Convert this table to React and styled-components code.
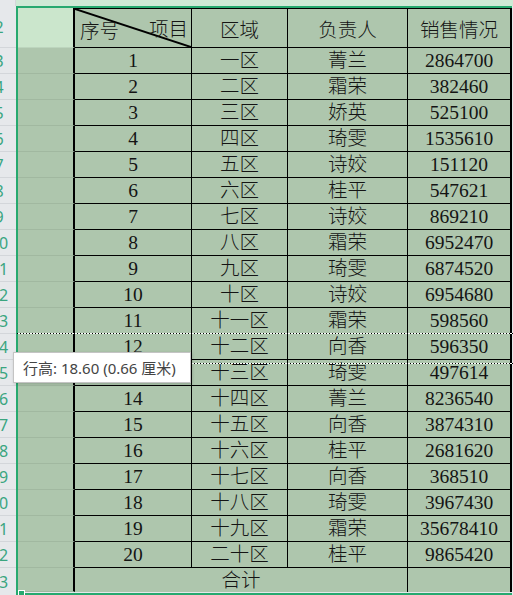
import styled, { createGlobalStyle } from 'styled-components';

const rows = [
  [1, '一区', '菁兰', 2864700],
  [2, '二区', '霜荣', 382460],
  [3, '三区', '娇英', 525100],
  [4, '四区', '琦雯', 1535610],
  [5, '五区', '诗姣', 151120],
  [6, '六区', '桂平', 547621],
  [7, '七区', '诗姣', 869210],
  [8, '八区', '霜荣', 6952470],
  [9, '九区', '琦雯', 6874520],
  [10, '十区', '诗姣', 6954680],
  [11, '十一区', '霜荣', 598560],
  [12, '十二区', '向香', 596350],
  [13, '十三区', '琦雯', 497614],
  [14, '十四区', '菁兰', 8236540],
  [15, '十五区', '向香', 3874310],
  [16, '十六区', '桂平', 2681620],
  [17, '十七区', '向香', 368510],
  [18, '十八区', '琦雯', 3967430],
  [19, '十九区', '霜荣', 35678410],
  [20, '二十区', '桂平', 9865420],
];

function App() {
  return (
    <>
      <GlobalStyle />
      <Page>
        <TopStrip>
          <Corner />
          <ColumnHeads />
        </TopStrip>
        <Main>
          <RowHeads>
            <RowLabel $h={42}><span>2</span></RowLabel>
            {rows.map((r) => (
              <RowLabel key={r[0]} $h={26}><span>{r[0] + 2}</span></RowLabel>
            ))}
            <RowLabel $h={27} $last><span>23</span></RowLabel>
          </RowHeads>

          <Frame>
            <Grid>
              <SideCell $active />
              <DiagHead>
                <svg width="100%" height="100%" preserveAspectRatio="none" viewBox="0 0 100 100">
                  <line x1="0" y1="0" x2="100" y2="100" stroke="#000" strokeWidth="2" vectorEffect="non-scaling-stroke" />
                </svg>
                <HeadLow>序号</HeadLow>
                <HeadHigh>项目</HeadHigh>
              </DiagHead>
              <Cell $head>区域</Cell>
              <Cell $head>负责人</Cell>
              <Cell $head $edge>销售情况</Cell>

              {rows.map((r) => (
                <Row key={r[0]} data={r} />
              ))}

              <SideCell />
              <TotalCell>合计</TotalCell>
              <Cell $edge $open />
            </Grid>
          </Frame>

          <Guide $top={327} />
          <Guide $top={357} />
          <Tooltip>行高: 18.60 (0.66 厘米)</Tooltip>
          <Handle />
        </Main>
      </Page>
    </>
  );
}

function Row({ data }) {
  const [no, area, owner, sales] = data;
  return (
    <>
      <SideCell />
      <Cell>{no}</Cell>
      <Cell>{area}</Cell>
      <Cell>{owner}</Cell>
      <Cell $edge>{sales}</Cell>
    </>
  );
}

const GlobalStyle = createGlobalStyle`
  html, body {
    margin: 0;
    padding: 0;
    overflow: hidden;
    background: #e6e8eb;
  }
`;

const Page = styled.div`
  width: 513px;
  height: 595px;
  overflow: hidden;
  font-family: "Liberation Serif", "Noto Sans CJK SC", serif;
  font-weight: 300;
  color: #141414;
`;

const TopStrip = styled.div`
  display: flex;
  height: 6px;
`;

const Corner = styled.div`
  width: 16px;
  background: #e6e8eb;
  border-right: 1px solid #d3d6da;
  box-sizing: border-box;
`;

const ColumnHeads = styled.div`
  flex: 1;
  background: #cfe9d5;
`;

const Main = styled.div`
  position: relative;
  display: flex;
`;

const RowHeads = styled.div`
  width: 16px;
  display: flex;
  flex-direction: column;
  background: #e6e8eb;
`;

const RowLabel = styled.div`
  height: ${(p) => p.$h}px;
  flex: none;
  box-sizing: border-box;
  overflow: hidden;
  display: flex;
  align-items: center;
  border-bottom: ${(p) => (p.$last ? 'none' : '1px solid #d3d6da')};
  font-family: "Noto Sans", sans-serif;
  font-weight: 400;
  font-size: 16px;
  color: #3aa57f;

  span {
    flex: none;
    width: 32px;
    margin-left: -17px;
    text-align: center;
  }
`;

const Frame = styled.div`
  border: 2px solid #27a96f;
  border-right: none;
`;

const Grid = styled.div`
  display: grid;
  grid-template-columns: 57px 117px 96px 120px 104px;
  grid-template-rows: 40px repeat(20, 26px) 24px;
  background: #aec6ad;
`;

const SideCell = styled.div`
  box-sizing: border-box;
  border-right: 2px solid #000;
  border-bottom: 1px solid rgba(0, 0, 0, 0.07);
  background: ${(p) => (p.$active ? '#cbe6cc' : '#aec6ad')};
`;

const Cell = styled.div`
  box-sizing: border-box;
  display: flex;
  align-items: center;
  justify-content: center;
  font-size: 19.5px;
  line-height: 1;
  padding-top: ${(p) => (p.$head ? '6px' : '1px')};
  border-top: ${(p) => (p.$head ? '1px solid #000' : 'none')};
  border-right: ${(p) => (p.$edge ? '2px' : '1px')} solid #000;
  border-bottom: ${(p) => (p.$open ? 'none' : '1px solid #000')};
  white-space: nowrap;
`;

const DiagHead = styled.div`
  position: relative;
  box-sizing: border-box;
  display: flex;
  align-items: center;
  justify-content: space-between;
  padding: 6px 3px 0 5px;
  border-top: 1px solid #000;
  border-right: 1px solid #000;
  border-bottom: 1px solid #000;
  font-size: 19.5px;
  line-height: 1;

  svg {
    position: absolute;
    inset: 0;
  }
`;

const HeadLow = styled.span`
  position: relative;
  top: 1px;
`;

const HeadHigh = styled.span`
  position: relative;
  top: -1px;
`;

const TotalCell = styled(Cell)`
  grid-column: span 3;
  border-bottom: none;
`;

const Guide = styled.div`
  position: absolute;
  left: 17px;
  right: 0;
  top: ${(p) => p.$top}px;
  height: 1px;
  background: repeating-linear-gradient(90deg, #000 0 1px, #fff 1px 3px);
`;

const Tooltip = styled.div`
  position: absolute;
  left: 13px;
  top: 346px;
  width: 178px;
  height: 31px;
  box-sizing: border-box;
  display: flex;
  align-items: center;
  padding-left: 9px;
  background: #fff;
  border: 1px solid #c4c4c4;
  box-shadow: 1px 1px 3px rgba(0, 0, 0, 0.2);
  font-family: "Noto Sans", "Noto Sans CJK SC", sans-serif;
  font-weight: 400;
  font-size: 15px;
  color: #444;
  white-space: nowrap;
`;

const Handle = styled.div`
  position: absolute;
  left: 18px;
  top: 584px;
  width: 5px;
  height: 5px;
  background: #27a96f;
  border: 1px solid #fff;
`;

export default App;
